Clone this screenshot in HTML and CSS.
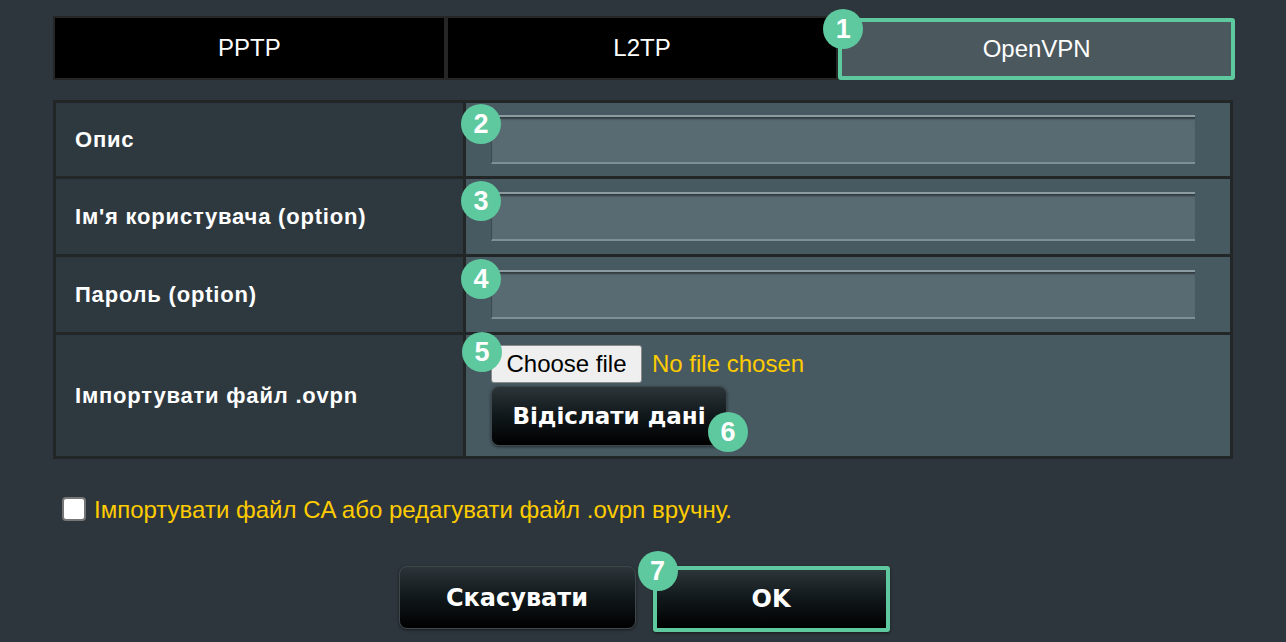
FILE: index.html
```html
<!DOCTYPE html>
<html lang="uk">
<head>
<meta charset="utf-8">
<link rel="stylesheet" href="styles.css">
</head>
<body>
<div class="page">
  <div class="tabs">
    <div class="tab">PPTP</div>
    <div class="tab">L2TP</div>
    <div class="tab tab-active">OpenVPN<span class="badge b1">1</span></div>
  </div>

  <div class="form">
    <div class="label">Опис</div>
    <div class="value"><div class="field"><input class="text" type="text"><span class="badge bi">2</span></div></div>
    <div class="label">Ім'я користувача (option)</div>
    <div class="value"><div class="field"><input class="text" type="text"><span class="badge bi">3</span></div></div>
    <div class="label">Пароль (option)</div>
    <div class="value"><div class="field"><input class="text" type="password"><span class="badge bi">4</span></div></div>
    <div class="label">Імпортувати файл .ovpn</div>
    <div class="value value-file">
      <div class="filerow">
        <span class="choose">Choose file<span class="badge b5">5</span></span>
        <span class="nofile">No file chosen</span>
      </div>
      <div class="submitwrap">
        <button class="btn submit">Відіслати дані</button>
        <span class="badge b6">6</span>
      </div>
    </div>
  </div>

  <label class="check">
    <span class="box"></span>
    <span class="check-text">Імпортувати файл CA або редагувати файл .ovpn вручну.</span>
  </label>

  <div class="actions">
    <button class="btn action">Скасувати</button>
    <div class="okwrap">
      <button class="btn action ok">OK</button>
      <span class="badge b7">7</span>
    </div>
  </div>
</div>
</body>
</html>
```

FILE: styles.css
```css
* { box-sizing: border-box; }
html, body {
  margin: 0;
  padding: 0;
  background: #2d363c;
  width: 1286px;
  height: 642px;
  overflow: hidden;
  font-family: "Liberation Sans", Arial, sans-serif;
}
.page {
  padding: 16px 51px 0 53px;
}
.tabs {
  display: flex;
  height: 64px;
  width: 1182px;
}
.tab {
  flex: 1;
  background: #000;
  border: 2px solid #262626;
  color: #fff;
  font-size: 24px;
  display: flex;
  align-items: center;
  justify-content: center;
  position: relative;
}
.tab-active {
  background: #4b585e;
  border: 4px solid #5ec89e;
  border-radius: 3px;
  margin-top: 2px;
}
.badge {
  position: absolute;
  width: 40px;
  height: 40px;
  border-radius: 50%;
  background: #5ec89e;
  color: #fff;
  font-family: "Liberation Sans", Arial, sans-serif;
  font-weight: bold;
  font-size: 27px;
  letter-spacing: 0;
  line-height: 40px;
  text-align: center;
  z-index: 2;
}
.b1 { left: -19px; top: -13px; }
.form {
  margin-top: 20px;
  width: 1180px;
  display: grid;
  grid-template-columns: 407px 1fr;
  grid-template-rows: 73px 75px 75px 121px;
  gap: 3px;
  padding: 3px;
  background: #232626;
}
.label {
  background: #2e393f;
  color: #fff;
  font-weight: bold;
  font-size: 22px;
  letter-spacing: 0.8px;
  display: flex;
  align-items: center;
  padding-left: 19px;
}
.value {
  background: #475961;
  display: flex;
  align-items: center;
  padding-left: 25px;
}
.field {
  position: relative;
}
.text {
  display: block;
  width: 704px;
  height: 49px;
  margin: 0;
  background: #586b72;
  border: 0;
  border-top: 2px solid #8d9ca1;
  border-bottom: 2px solid #7e8f95;
  border-left: 1px solid #3d4a50;
  box-shadow: inset 0 3px 2px -1px rgba(0,0,0,0.45);
  outline: none;
}
.bi { left: -30px; top: -11px; }
.value-file {
  flex-direction: column;
  align-items: flex-start;
  justify-content: center;
  gap: 3px;
}
.filerow {
  display: flex;
  align-items: center;
  gap: 10px;
}
.choose {
  position: relative;
  display: inline-flex;
  align-items: center;
  justify-content: center;
  width: 151px;
  height: 38px;
  background: #efefef;
  border: 1px solid #8a8a8a;
  border-radius: 3px;
  color: #000;
  font-size: 24px;
}
.b5 { left: -30px; top: -14px; }
.nofile {
  color: #ffcc00;
  font-size: 24px;
}
.submitwrap, .okwrap {
  position: relative;
}
.btn {
  display: flex;
  align-items: center;
  justify-content: center;
  border: 1px solid #3e474b;
  border-radius: 8px;
  background: linear-gradient(#2c3539 0%, #121a1d 45%, #000 100%);
  color: #fff;
  font-family: "DejaVu Sans", Verdana, sans-serif;
  font-weight: bold;
  box-shadow: 0 1px 3px rgba(0,0,0,0.5);
  margin: 0;
  padding: 0;
}
.submit {
  width: 236px;
  height: 60px;
  font-size: 23px;
}
.b6 { left: 217px; top: 26px; }
.check {
  display: flex;
  align-items: center;
  margin: 34px 0 0 9px;
  gap: 8px;
}
.box {
  width: 24px;
  height: 24px;
  background: #fff;
  border: 2px solid #767676;
  border-radius: 4px;
}
.check-text {
  color: #ffcc00;
  font-size: 24px;
  margin-top: 3px;
}
.actions {
  display: flex;
  justify-content: center;
  gap: 17px;
  margin-top: 42px;
  width: 1182px;
}
.action {
  width: 237px;
  height: 63px;
  font-size: 24px;
}
.ok {
  border: 4px solid #5ec89e;
  border-radius: 3px;
  height: 66px;
}
.b7 { left: -15px; top: -15px; }
```
